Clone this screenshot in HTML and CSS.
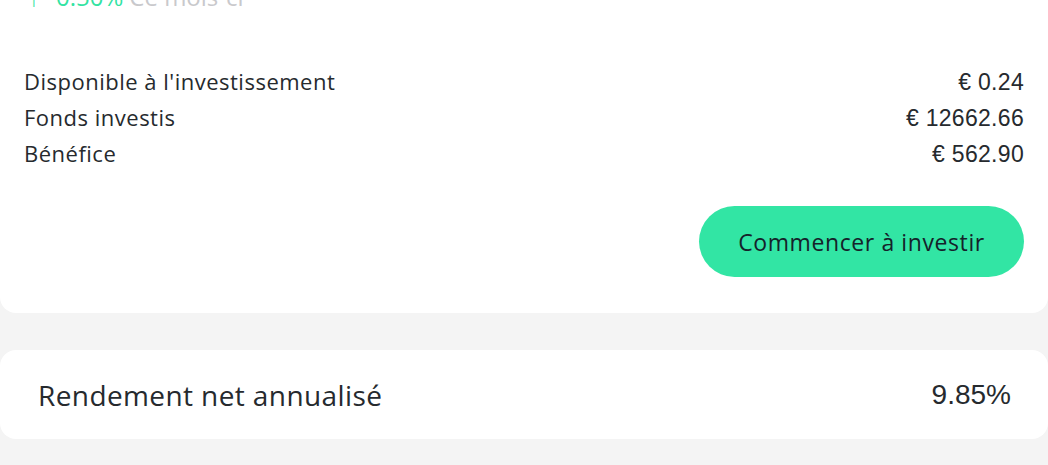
FILE: index.html
```html
<!DOCTYPE html>
<html lang="fr">
<head>
  <meta charset="UTF-8">
  <meta name="viewport" content="width=device-width, initial-scale=1.0">
  <title>Portefeuille</title>
  <link rel="stylesheet" href="styles.css">
</head>
<body>
  <div class="card summary">
    <div class="trend">
      <span class="arrow">↑</span>
      <span class="pct">0.50%</span>
      <span class="period">Ce mois-ci</span>
    </div>

    <ul class="stats">
      <li><span>Disponible à l'investissement</span><span class="amount">€ 0.24</span></li>
      <li><span>Fonds investis</span><span class="amount">€ 12662.66</span></li>
      <li><span>Bénéfice</span><span class="amount">€ 562.90</span></li>
    </ul>

    <div class="actions">
      <button type="button">Commencer à investir</button>
    </div>
  </div>

  <div class="card yield">
    <span>Rendement net annualisé</span>
    <span class="amount">9.85%</span>
  </div>
</body>
</html>
```

FILE: styles.css
```css
body {
  font-family: "Open Sans", "Noto Sans", sans-serif;
  margin: 0;
  padding: 0;
  background-color: #f4f4f4;
  color: #262a2e;
}
.card {
  background-color: #fff;
  border-radius: 16px;
}
.summary {
  margin-top: -30px;
  padding: 12px 24px 36px;
}
.trend {
  font-size: 24px;
  line-height: 30px;
  display: flex;
  align-items: baseline;
  gap: 6px;
}
.trend .arrow,
.trend .pct {
  color: #33e3a2;
}
.trend .arrow {
  margin-left: 4px;
  margin-right: 10px;
}
.trend .period {
  color: #c9c9cc;
}
.stats {
  list-style: none;
  margin: 51px 0 0;
  padding: 0;
  font-size: 22px;
  letter-spacing: 0.5px;
}
.stats li {
  display: flex;
  justify-content: space-between;
  align-items: baseline;
  height: 36px;
  line-height: 36px;
}
.stats .amount {
  font-size: 23px;
  letter-spacing: 0.3px;
}
.amount {
  font-family: "Liberation Sans", Arial, sans-serif;
}
.actions {
  display: flex;
  justify-content: flex-end;
  margin-top: 35px;
}
button {
  width: 325px;
  height: 71px;
  border: none;
  border-radius: 36px;
  background-color: #32e5a4;
  color: #15222a;
  font-family: "Open Sans", "Noto Sans", sans-serif;
  font-size: 23px;
  letter-spacing: 0.6px;
  cursor: pointer;
}
.yield {
  margin-top: 37px;
  height: 89px;
  padding: 0 37px 0 38px;
  display: flex;
  justify-content: space-between;
  align-items: center;
  font-size: 28px;
  letter-spacing: 0.4px;
}
.yield .amount {
  font-size: 28px;
  letter-spacing: 0;
}
```
